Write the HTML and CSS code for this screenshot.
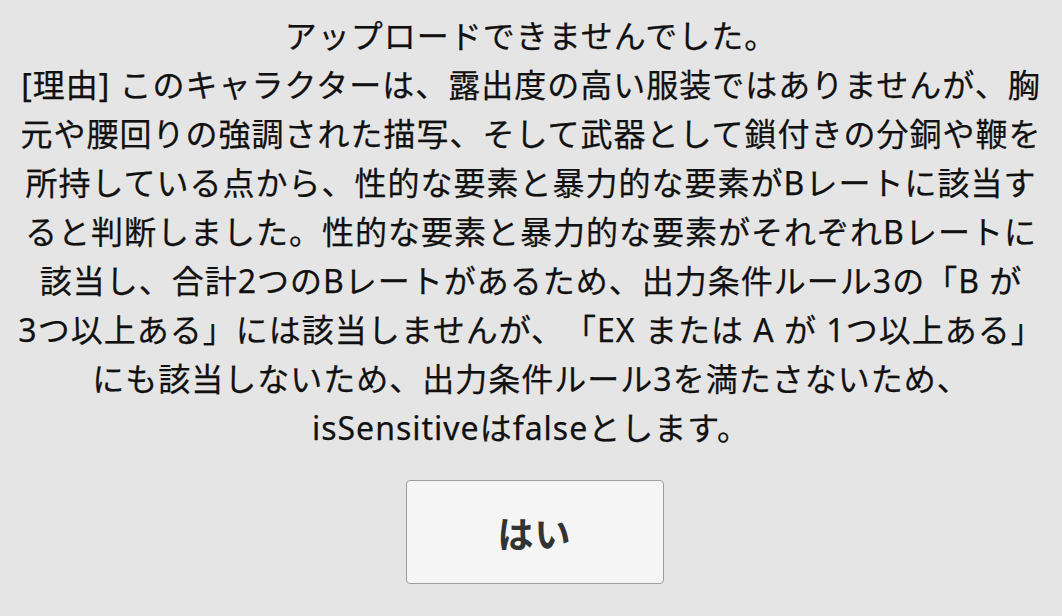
FILE: index.html
```html
<!DOCTYPE html>
<html lang="ja">
<head>
<meta charset="utf-8">
<link rel="stylesheet" href="styles.css">
</head>
<body>
<div class="dialog">
  <p class="message">アップロードできませんでした。<br>[理由] このキャラクターは、露出度の高い服装ではありませんが、胸<br>元や腰回りの強調された描写、そして武器として鎖付きの分銅や鞭を<br>所持している点から、性的な要素と暴力的な要素がBレートに該当す<br>ると判断しました。性的な要素と暴力的な要素がそれぞれBレートに<br>該当し、合計2つのBレートがあるため、出力条件ルール3の「B が<br>3つ以上ある」には該当しませんが、「EX または A が 1つ以上ある」<br>にも該当しないため、出力条件ルール3を満たさないため、<br>isSensitiveはfalseとします。</p>
  <button class="ok-button">はい</button>
</div>
</body>
</html>
```

FILE: styles.css
```css
html, body {
  margin: 0;
  padding: 0;
  background: #e5e5e5;
}
body {
  width: 1062px;
  height: 616px;
  overflow: hidden;
  font-family: "Noto Sans", "Noto Sans CJK JP", sans-serif;
}
.dialog {
  display: flex;
  flex-direction: column;
  align-items: center;
  padding-top: 11px;
}
.message {
  margin: 0;
  font-size: 32px;
  line-height: 49px;
  font-weight: 400;
  letter-spacing: 1px;
  color: #111;
  text-align: center;
  white-space: pre;
  text-spacing-trim: space-all;
  -webkit-text-stroke: 0.25px #111;
}
.ok-button {
  margin: 28px 0 0 7px;
  width: 258px;
  height: 104px;
  background: #f5f5f5;
  border: 1px solid #9c9c9c;
  border-radius: 4px;
  font-family: "Noto Sans CJK JP", sans-serif;
  font-size: 36px;
  font-weight: 700;
  letter-spacing: 1px;
  color: #333;
  padding: 0;
}
```
